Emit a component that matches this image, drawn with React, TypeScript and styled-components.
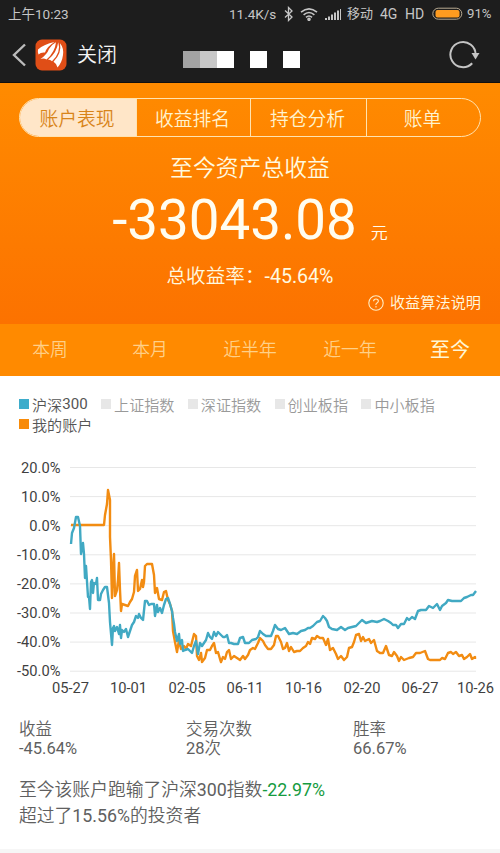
import React from "react";
import styled, { createGlobalStyle } from "styled-components";

const Global = createGlobalStyle`
  * { box-sizing: border-box; }
  html, body { margin: 0; background: #fff; }
  body { font-family: Roboto, "Noto Sans CJK SC", sans-serif; font-weight: 350; overflow: hidden; }
`;

const Screen = styled.main`
  width: 500px;
  height: 853px;
  display: flex;
  flex-direction: column;
  background: #fff;
`;

const Num = styled.span`
  font-weight: 400;
`;

const StatusBar = styled.div`
  height: 28px;
  flex: none;
  display: flex;
  align-items: center;
  justify-content: space-between;
  padding: 0 7px 1px 8px;
  background: #1d1d1d;
  color: #c6c6c6;
  font-size: 14px;
  line-height: 26px;
`;

const StatusGroup = styled.div`
  display: flex;
  align-items: center;
  svg { flex: none; }
`;

const StatusText = styled.span<{ $width: number; $size?: number }>`
  width: ${(p) => p.$width}px;
  flex: none;
  font-size: ${(p) => p.$size ?? 14}px;
  font-weight: 400;
  white-space: nowrap;
`;

const WifiIcon = styled.svg`
  margin-left: 5px;
`;

const NavBar = styled.header`
  height: 55px;
  flex: none;
  display: flex;
  align-items: center;
  padding: 0 20px 0 12px;
  background: #1d1d1d;
  border-bottom: 1px solid #11100f;
`;

const CloseLabel = styled.span`
  margin-left: 10px;
  width: 106px;
  color: #f4f4f4;
  font-size: 20px;
  line-height: 28px;
`;

const AppIcon = styled.svg`
  margin-left: 9px;
  flex: none;
`;

const MosaicRow = styled.div`
  display: flex;
  margin-top: 8px;
  flex: 1;
`;

const Mosaic = styled.i<{ $color?: string; $gap?: number }>`
  width: 17px;
  height: 17px;
  margin-right: ${(p) => p.$gap ?? 0}px;
  background: ${(p) => p.$color ?? "#fff"};
`;

const Hero = styled.section`
  height: 241px;
  flex: none;
  display: flex;
  flex-direction: column;
  align-items: center;
  background: linear-gradient(#ff8b00, #fc7200);
  color: #fffae0;
  > * { flex: none; }
`;

const Segments = styled.nav`
  width: 462px;
  height: 39px;
  margin-top: 15px;
  display: grid;
  grid-template-columns: 116px 114px 116px 1fr;
  border: 1px solid #ffe3b0;
  border-radius: 20px;
  overflow: hidden;
`;

const Segment = styled.div<{ $active?: boolean }>`
  display: flex;
  align-items: center;
  justify-content: center;
  padding: 0 2px 1px 0;
  font-size: 18.8px;
  color: ${(p) => (p.$active ? "#d88419" : "#fff3cf")};
  background: ${(p) => (p.$active ? "#ffe6c8" : "transparent")};
  & + & { border-left: 1px solid #ffe3b0; }
`;

const HeroTitle = styled.div`
  margin-top: 15px;
  font-size: 22.8px;
  line-height: 34px;
`;

const Amount = styled.div`
  height: 60px;
  margin: 4px 0 0 0;
  display: flex;
  align-items: baseline;
  font-size: 54.7px;
  line-height: 60px;
  font-weight: 400;
  color: #fffdf0;
`;

const Unit = styled.span`
  margin-left: 14px;
  font-size: 17px;
  line-height: 20px;
  font-weight: 350;
`;

const Rate = styled.div`
  margin-top: 12px;
  font-size: 19.6px;
  line-height: 30px;
`;

const Explain = styled.div`
  align-self: flex-end;
  margin: 0 19px 0 0;
  display: flex;
  align-items: center;
  gap: 6px;
  font-size: 15.2px;
  line-height: 22px;
`;

const Periods = styled.nav`
  height: 52px;
  flex: none;
  display: grid;
  grid-template-columns: repeat(5, 1fr);
  align-items: center;
  padding-bottom: 4px;
  text-align: center;
  background: #ff8a00;
`;

const Period = styled.span<{ $active?: boolean }>`
  font-size: ${(p) => (p.$active ? 20 : 17.8)}px;
  font-weight: ${(p) => (p.$active ? 400 : 350)};
  color: ${(p) => (p.$active ? "#fff6d5" : "#ffd088")};
`;

const Legend = styled.div`
  height: 76px;
  flex: none;
  padding: 18px 0 0 19px;
  display: flex;
  flex-wrap: wrap;
  align-content: flex-start;
  column-gap: 13.4px;
`;

const LegendItem = styled.div<{ $muted?: boolean }>`
  display: flex;
  align-items: center;
  height: 20px;
  font-size: 15.1px;
  color: ${(p) => (p.$muted ? "#999" : "#555")};
`;

const Swatch = styled.i<{ $color: string }>`
  width: 10px;
  height: 10px;
  margin-right: 3px;
  background: ${(p) => p.$color};
`;

const Chart = styled.svg`
  display: block;
  flex: none;
  font-weight: 400;
`;

const Stats = styled.div`
  height: 76px;
  flex: none;
  padding: 19px 0 0 19px;
  display: grid;
  grid-template-columns: 167px 167px 1fr;
  font-size: 16.5px;
  line-height: 19px;
  color: #606060;
`;

const Stat = styled.div`
  display: flex;
  flex-direction: column;
`;

const Summary = styled.p`
  margin: 0;
  flex: 1;
  padding: 0 0 0 19px;
  font-size: 17.8px;
  line-height: 26px;
  color: #606060;
`;

const Loss = styled(Num)`
  color: #169b3f;
`;

const Footer = styled.div`
  height: 4px;
  flex: none;
  background: #f6f6f6;
`;

const TICKS = ["20.0%", "10.0%", "0.0%", "-10.0%", "-20.0%", "-30.0%", "-40.0%", "-50.0%"];
const DATES: [string, number][] = [
  ["05-27", 70.5], ["10-01", 128.5], ["02-05", 187], ["06-11", 245],
  ["10-16", 303.5], ["02-20", 362], ["06-27", 420], ["10-26", 475.5],
];

const INDEX_LINE =
  "71,544 72,533 74,528 76,517 78,517 80,526 81,554 83,543 84,554 85,578 86,566 88,597 89,597 90,609 91,582 92,580 93,593 94,583 96,584 97,578 98,600 100,600 101,594 103,590 105,587 107,587 109,603 110,622 112,645 113,628 114,626 115,631 117,627 119,634 120,625 121,638 122,630 124,632 126,629 128,637 130,631 132,625 134,622 136,616 138,618 139,614 141,618 143,620 145,601 147,601 149,605 151,604 154,604 155,616 157,605 158,612 160,608 162,613 164,605 166,599 168,598 170,604 172,611 173,618 174,624 175,632 177,641 179,634 180,644 182,640 183,651 185,650 188,649 190,651 192,653 194,646 196,641 198,654 200,643 202,646 204,643 206,640 208,633 210,637 212,639 214,632 216,636 218,632 220,634 223,637 225,637 227,635 229,643 231,643 234,644 238,644 240,638 243,637 245,643 249,643 252,640 256,639 258,637 260,631 263,634 266,636 271,636 273,631 275,625 278,629 281,630 285,628 289,634 293,633 297,634 301,631 305,630 308,628 310,628 313,626 317,622 320,621 323,616 325,618 327,621 329,627 332,629 337,630 341,627 345,630 348,628 352,627 356,626 360,622 362,620 366,623 372,621 377,622 380,621 384,619 388,621 391,623 393,625 396,625 398,628 401,624 404,624 407,618 409,620 412,617 415,619 418,611 421,610 426,610 429,606 433,608 437,604 440,610 442,606 446,603 448,600 452,601 461,601 464,598 467,597 471,595 473,595 476,591";

const ACCOUNT_LINE =
  "71,525 104,525 105,515 107,504 108,490 110,500 110,537 111,560 112,598 113,570 114,554 115,596 117,590 118,580 119,563 120,590 121,611 122,604 125,605 128,606 130,602 132,599 134,592 135,576 137,570 138,591 140,589 142,580 143,587 144,582 145,566 147,564 152,564 154,575 155,593 157,588 159,599 162,600 164,592 166,591 168,600 170,604 172,611 173,631 175,642 177,652 179,640 181,649 184,646 186,649 188,644 191,646 194,634 196,636 197,656 199,660 201,653 202,662 205,658 207,650 210,650 212,646 214,643 216,653 218,652 220,659 221,662 223,657 225,659 227,652 229,650 231,659 234,656 237,658 240,660 243,656 245,659 248,655 250,650 253,648 255,649 258,643 260,638 263,641 265,645 268,649 271,649 274,645 276,636 278,636 281,642 283,649 285,648 287,643 289,651 291,647 294,652 297,651 300,651 303,648 306,646 308,642 310,644 312,638 315,639 317,636 320,638 323,638 326,645 328,639 330,650 333,648 336,654 338,659 341,656 344,660 347,657 349,648 352,647 354,642 356,635 359,634 361,641 363,637 365,641 369,639 371,643 374,640 377,651 380,653 383,653 386,646 389,655 392,656 394,652 397,656 399,661 401,657 404,660 409,658 413,657 416,653 420,653 425,651 428,659 430,660 440,660 442,658 445,659 448,653 451,652 453,654 456,652 459,656 462,655 464,659 467,657 470,654 472,659 475,657 475,659";

function ChartView() {
  return (
    <Chart width="500" height="249" viewBox="0 452 500 249" fontSize="14.7" fill="#3f3f3f">
      {TICKS.map((t, i) => (
        <g key={t}>
          <path d={`M70 ${467.5 + i * 29.1}H476`} stroke="#e7e7e7" />
          <text x="60.500" y={472.5 + i * 29.1} textAnchor="end">{t}</text>
        </g>
      ))}
      {DATES.map(([d, x]) => (
        <text key={d} x={x} y="693.3" textAnchor="middle">{d}</text>
      ))}
      <polyline points={ACCOUNT_LINE} fill="none" stroke="#f28c12" strokeWidth="2.4" strokeLinejoin="round" />
      <polyline points={INDEX_LINE} fill="none" stroke="#41a9c3" strokeWidth="2.4" strokeLinejoin="round" />
    </Chart>
  );
}

export default function App() {
  return (
    <>
      <Global />
      <Screen>
        <StatusBar>
          <StatusText $width={70} $size={13.5}>上午10:23</StatusText>
          <StatusGroup>
            <StatusText $width={54} $size={13.5}>11.4K/s</StatusText>
            <svg width="12" height="16" viewBox="0 0 12 16" fill="none" stroke="#c6c6c6" strokeWidth="1.3">
              <path d="M2 4.500l7 6.500-3.500 3.500v-13L9 5l-7 6.500" />
            </svg>
            <WifiIcon width="18" height="14" viewBox="0 0 18 14" fill="none" stroke="#c6c6c6" strokeWidth="1.6">
              <path d="M1 5.200Q9-1.600 17 5.200M3.600 7.800Q9 3.200 14.400 7.800M6 10.400Q9 7.600 12 10.400" />
              <circle cx="9" cy="12.300" r="1" />
            </WifiIcon>
            <svg width="29" height="14" viewBox="0 0 29 14" fill="#c6c6c6">
              <path d="M7 11h2v2H7zM10 9.500h2V13h-2zM13 7.500h2V13h-2zM16 5.500h2V13h-2zM19 3.500h2V13h-2zM22 2h1v11h-1z" />
            </svg>
            <StatusText $width={33} $size={13}>移动</StatusText>
            <StatusText $width={25}>4G</StatusText>
            <StatusText $width={27}>HD</StatusText>
            <svg width="35" height="14" viewBox="0 0 35 14">
              <rect x=".8" y="1.200" width="29" height="11" rx="5.500" fill="none" stroke="#b8aa92" />
              <rect x="3.500" y="3" width="24" height="7.500" rx="2" fill="#ff9c1f" />
            </svg>
            <StatusText $width={26} $size={13.2}>91%</StatusText>
          </StatusGroup>
        </StatusBar>
        <NavBar>
          <svg width="14" height="24" viewBox="0 0 14 24" fill="none" stroke="#bcbcbc" strokeWidth="2.4">
            <path d="M13 1.500L2 12l11 10.500" />
          </svg>
          <AppIcon width="32" height="32" viewBox="0 0 32 32">
            <rect x=".5" y=".5" width="31" height="31" rx="6.500" fill="#e04e17" />
            <g fill="#fff">
              <path d="M3 10.500Q9 5 19.500 3Q12 7.500 10 13.500Q6 13 3.500 15.500Q2.500 13 3 10.500z" />
              <path d="M21 3.200Q20 13 11.500 20.500Q9 19 5.500 20Q12 15.500 14 10Q16.500 5.500 21 3.200z" />
              <path d="M23.200 3.200Q26.500 13 17 22.200Q15.500 20.200 13 20.800Q22 13.500 23.200 3.200z" />
              <path d="M25 4.200Q29 9 28 16Q27 23.500 22.500 28.500Q21.500 24.500 18.500 22.800Q27 14 25 4.200z" />
            </g>
          </AppIcon>
          <CloseLabel>关闭</CloseLabel>
          <MosaicRow>
            <Mosaic $color="#a3a3a3" />
            <Mosaic $color="#c8c8c8" />
            <Mosaic $gap={16} />
            <Mosaic $gap={16} />
            <Mosaic />
          </MosaicRow>
          <svg width="32" height="30" viewBox="0 0 32 30" fill="none" stroke="#c4c4c4" strokeWidth="2">
            <path d="M24.200 23.200A12.600 12.600 0 1 1 27.600 15" />
            <path d="M23.500 13h8l-4 6.500z" fill="#c4c4c4" stroke="none" />
          </svg>
        </NavBar>
        <Hero>
          <Segments>
            <Segment $active>账户表现</Segment>
            <Segment>收益排名</Segment>
            <Segment>持仓分析</Segment>
            <Segment>账单</Segment>
          </Segments>
          <HeroTitle>至今资产总收益</HeroTitle>
          <Amount>-33043.08<Unit>元</Unit></Amount>
          <Rate>总收益率：<Num>-45.64%</Num></Rate>
          <Explain>
            <svg width="16" height="16" viewBox="0 0 16 16" fill="none" stroke="#ffedc4" strokeWidth="1.1">
              <circle cx="8" cy="8" r="7.200" />
              <path d="M5.600 6.300Q5.700 4 8 4T10.400 6.100Q10.400 7.200 9 8T8 10M8 11v1.500" />
            </svg>
            收益算法说明
          </Explain>
        </Hero>
        <Periods>
          <Period>本周</Period>
          <Period>本月</Period>
          <Period>近半年</Period>
          <Period>近一年</Period>
          <Period $active>至今</Period>
        </Periods>
        <Legend>
          <LegendItem><Swatch $color="#3daccb" />沪深<Num>300</Num></LegendItem>
          <LegendItem $muted><Swatch $color="#e7e7e7" />上证指数</LegendItem>
          <LegendItem $muted><Swatch $color="#e7e7e7" />深证指数</LegendItem>
          <LegendItem $muted><Swatch $color="#e7e7e7" />创业板指</LegendItem>
          <LegendItem $muted><Swatch $color="#e7e7e7" />中小板指</LegendItem>
          <LegendItem><Swatch $color="#f88b09" />我的账户</LegendItem>
        </Legend>
        <ChartView />
        <Stats>
          <Stat><span>收益</span><Num>-45.64%</Num></Stat>
          <Stat><span>交易次数</span><span><Num>28</Num>次</span></Stat>
          <Stat><span>胜率</span><Num>66.67%</Num></Stat>
        </Stats>
        <Summary>
          至今该账户跑输了沪深<Num>300</Num>指数<Loss>-22.97%</Loss>
          <br />
          超过了<Num>15.56%</Num>的投资者
        </Summary>
        <Footer />
      </Screen>
    </>
  );
}
